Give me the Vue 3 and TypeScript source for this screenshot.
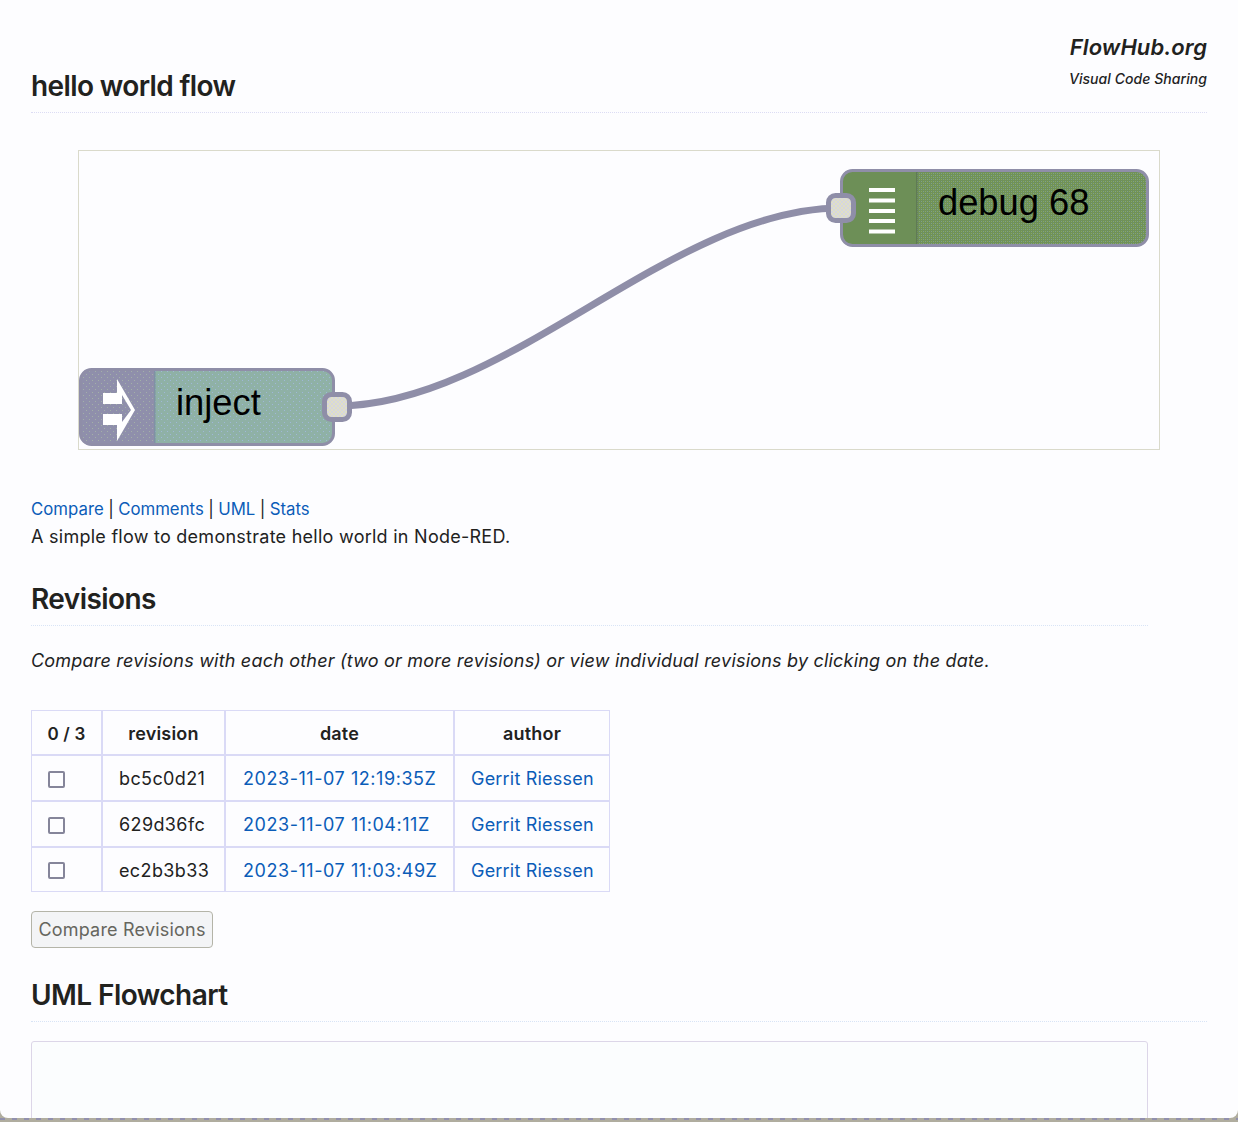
<template>
  <div class="page">
    <header class="top">
      <h1 class="title">hello world flow</h1>
      <div class="brand">
        <div class="brand-name">FlowHub.org</div>
        <div class="brand-sub">Visual Code Sharing</div>
      </div>
    </header>

    <!-- flow canvas, node positions are the content -->
    <div class="canvas">
      <svg width="1080" height="298" viewBox="0 0 1080 298">
        <defs>
          <pattern id="dither-green" width="4" height="4" patternUnits="userSpaceOnUse">
            <rect width="4" height="4" fill="#6f9159" />
            <rect x="0" y="0" width="1" height="1" fill="#7f9f8f" />
            <rect x="2" y="2" width="1" height="1" fill="#7f9f8f" />
            <rect x="2" y="0" width="1" height="1" fill="#8aa860" />
            <rect x="0" y="2" width="1" height="1" fill="#8aa860" />
          </pattern>
          <pattern id="dither-teal" width="6" height="6" patternUnits="userSpaceOnUse">
            <rect width="6" height="6" fill="#8fb1a6" />
            <rect x="1" y="1" width="1" height="1" fill="#9fb8d8" />
            <rect x="4" y="4" width="1" height="1" fill="#9fb8d8" />
          </pattern>
          <pattern id="dither-purple" width="6" height="6" patternUnits="userSpaceOnUse">
            <rect width="6" height="6" fill="#8f8fab" />
            <rect x="1" y="1" width="1" height="1" fill="#a3b0a8" />
            <rect x="4" y="4" width="1" height="1" fill="#a3b0a8" />
          </pattern>
          <pattern id="dither-port" width="4" height="4" patternUnits="userSpaceOnUse">
            <rect width="4" height="4" fill="#e0e0c6" />
            <rect x="0" y="0" width="2" height="2" fill="#d6d6de" />
            <rect x="2" y="2" width="2" height="2" fill="#d6d6de" />
          </pattern>
          <clipPath id="inject-clip"><rect x="1" y="218" width="254" height="76" rx="11" /></clipPath>
          <clipPath id="debug-clip"><rect x="762" y="19" width="307" height="76" rx="11" /></clipPath>
        </defs>

        <path d="M258 255 C 428 255, 592 57, 762 57" class="wire" />

        <!-- inject node -->
        <g clip-path="url(#inject-clip)">
          <rect x="0" y="217" width="256" height="78" fill="url(#dither-teal)" />
          <rect x="0" y="217" width="76" height="78" fill="url(#dither-purple)" />
          <rect x="75" y="217" width="1.5" height="78" fill="#7f92a4" />
        </g>
        <rect x="1.5" y="218.5" width="253" height="75" rx="11" class="node-border" />
        <path d="M24 242 H38 V228 L56 259 L38 290 V274 H24 V263 H43 V253 H24 Z M43 242 V253 V263 V271 L52 259 L43 244 Z" fill="#fff" fill-rule="evenodd" />
        <text x="97" y="264" class="node-label">inject</text>
        <rect x="245.5" y="243.5" width="25" height="25" rx="7" class="port" />

        <!-- debug node -->
        <g clip-path="url(#debug-clip)">
          <rect x="761" y="18" width="309" height="78" fill="url(#dither-green)" />
          <rect x="761" y="18" width="77" height="78" fill="#6d8f57" />
          <rect x="837" y="18" width="1.5" height="78" fill="#5f7a55" />
        </g>
        <rect x="762.5" y="19.5" width="306" height="75" rx="11" class="node-border" />
        <g fill="#fff">
          <rect x="790" y="37" width="26" height="4" />
          <rect x="790" y="47.5" width="26" height="4" />
          <rect x="790" y="58" width="26" height="4" />
          <rect x="790" y="68" width="26" height="4" />
          <rect x="790" y="78.5" width="26" height="4" />
        </g>
        <text x="859" y="64" class="node-label">debug 68</text>
        <rect x="749.5" y="44.5" width="25" height="25" rx="7" class="port" />
      </svg>
    </div>

    <p class="links">
      <a>Compare</a> | <a>Comments</a> | <a>UML</a> | <a>Stats</a>
    </p>
    <p class="desc">A simple flow to demonstrate hello world in Node-RED.</p>

    <h2 class="section narrow">Revisions</h2>
    <p class="hint">Compare revisions with each other (two or more revisions) or view individual revisions by clicking on the date.</p>

    <table class="revs">
      <thead>
        <tr>
          <th class="c-check">0 / 3</th>
          <th class="c-rev">revision</th>
          <th class="c-date">date</th>
          <th class="c-author">author</th>
        </tr>
      </thead>
      <tbody>
        <tr v-for="row in revisions" :key="row.rev">
          <td><input type="checkbox" class="check" /></td>
          <td class="rev">{{ row.rev }}</td>
          <td class="date"><a>{{ row.date }}</a></td>
          <td class="author"><a>{{ row.author }}</a></td>
        </tr>
      </tbody>
    </table>

    <button class="compare" type="button">Compare Revisions</button>

    <h2 class="section uml">UML Flowchart</h2>
    <div class="uml-box"></div>
  </div>
</template>

<script setup lang="ts">
interface Revision {
  rev: string
  date: string
  author: string
}

const revisions: Revision[] = [
  { rev: 'bc5c0d21', date: '2023-11-07 12:19:35Z', author: 'Gerrit Riessen' },
  { rev: '629d36fc', date: '2023-11-07 11:04:11Z', author: 'Gerrit Riessen' },
  { rev: 'ec2b3b33', date: '2023-11-07 11:03:49Z', author: 'Gerrit Riessen' },
]
</script>

<style>
html, body {
  height: 100%;
  margin: 0;
  overflow: hidden;
  background: repeating-linear-gradient(90deg, #9190ad 0 5px, #b0ad9f 5px 12px) no-repeat 0 1118px / 100% 2px, #b0ad9f;
}
</style>

<style scoped>
.page {
  box-sizing: border-box;
  height: 1118px;
  padding: 0 31px;
  overflow: hidden;
  background: #fdfdff;
  border-radius: 0 0 8px 8px;
  color: #22221e;
  font-family: Inter, "Liberation Sans", sans-serif;
  font-size: 18px;
  line-height: 28px;
}

.top {
  display: flex;
  justify-content: space-between;
  align-items: flex-end;
  height: 112px;
  border-bottom: 1px dotted #dcdcf4;
}

.title {
  margin: 0 0 8px;
  font-size: 28px;
  line-height: 36px;
  font-weight: 600;
  letter-spacing: -0.62px;
}

.brand {
  align-self: flex-start;
  margin-top: 31px;
  font-style: italic;
  font-weight: 600;
  text-align: right;
}

.brand-name {
  font-size: 22px;
  line-height: 32px;
  letter-spacing: 0.08px;
}

.brand-sub {
  font-size: 14px;
  line-height: 32px;
  font-weight: 500;
  letter-spacing: 0.06px;
}

.canvas {
  width: 1080px;
  height: 298px;
  margin: 37px 0 0 47px;
  border: 1px solid #dadacb;
}

.canvas svg {
  display: block;
  overflow: visible;
}

.wire {
  fill: none;
  stroke: #8f8ea8;
  stroke-width: 7;
}

.node-border {
  fill: none;
  stroke: #8f8ea8;
  stroke-width: 3;
}

.node-label {
  font-family: "Liberation Sans", sans-serif;
  font-size: 36.3px;
  fill: #000;
}

.port {
  fill: url(#dither-port);
  stroke: #8f8ea8;
  stroke-width: 5;
}

a {
  color: #0b5cb8;
}

.links {
  margin: 45px 0 0;
  font-size: 16.8px;
  word-spacing: -0.3px;
}

.desc {
  margin: 0;
  letter-spacing: 0.26px;
}

.section {
  margin: 0;
  font-size: 28px;
  line-height: 36px;
  font-weight: 600;
  letter-spacing: -0.56px;
  padding-bottom: 8px;
  border-bottom: 1px dotted #d8e4f6;
}

.narrow {
  width: 1117px;
  margin-top: 30px;
}

.hint {
  margin: 21px 0 0;
  font-style: italic;
  letter-spacing: 0.2px;
}

.revs {
  margin-top: 35px;
  border-collapse: separate;
  border-spacing: 0;
  table-layout: fixed;
  box-sizing: border-box;
  width: 579px;
  border: 1px solid #dadaf6;
}

.revs th,
.revs td {
  border-right: 2px solid #dadaf6;
  border-bottom: 2px solid #dadaf6;
  padding: 2px 0 0 16px;
  height: 46px;
  box-sizing: border-box;
  font-size: 18px;
  font-weight: 400;
  white-space: nowrap;
}

.revs th {
  height: 45px;
  padding: 2px 0 0;
  font-weight: 600;
  text-align: center;
  letter-spacing: 0.2px;
}

.revs thead th:first-child {
  font-size: 17px;
}

.revs th:last-child,
.revs td:last-child {
  border-right: 0;
}

.revs tbody tr:last-child td {
  height: 43px;
  border-bottom: 0;
}

.c-check { width: 71px; }
.c-rev { width: 123px; }
.c-date { width: 229px; }
.c-author { width: 154px; }

.rev { letter-spacing: 0.38px; }
.revs .date { padding-left: 17px; letter-spacing: 0.55px; }
.author { letter-spacing: 0.2px; }

.check {
  appearance: none;
  display: block;
  box-sizing: border-box;
  width: 17px;
  height: 17px;
  margin: 0;
  border: 2px solid #85859a;
  border-radius: 2px;
  background: #fdfdff;
}

.compare {
  display: block;
  box-sizing: border-box;
  width: 182px;
  height: 37px;
  margin-top: 19px;
  padding: 0;
  border: 1px solid #b4b4a8;
  border-radius: 4px;
  background: #f3f4f6;
  color: #66665e;
  font: inherit;
  letter-spacing: 0.2px;
}

.uml {
  margin-top: 29px;
}

.uml-box {
  box-sizing: border-box;
  width: 1117px;
  height: 200px;
  margin-top: 19px;
  border: 1px solid #dcd6e8;
  border-radius: 3px;
  background: #fbfdfe;
}
</style>
